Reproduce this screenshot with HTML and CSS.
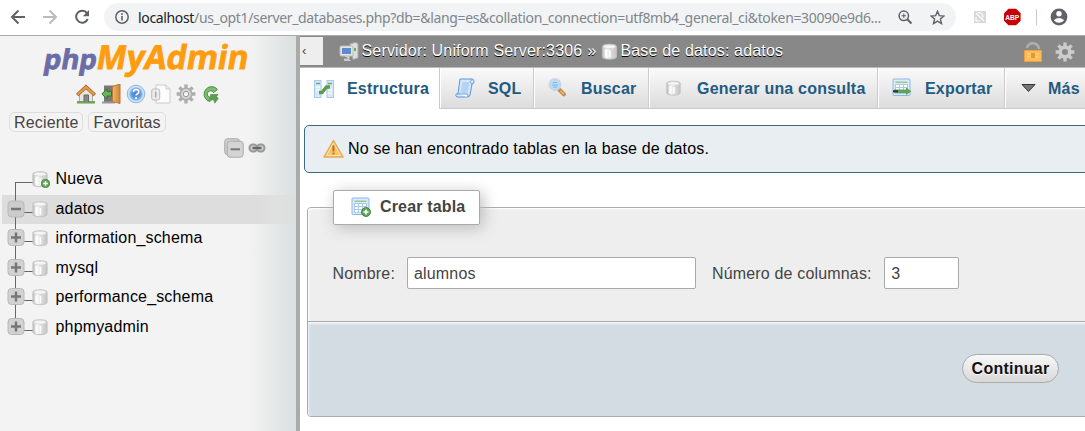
FILE: index.html
```html
<!DOCTYPE html>
<html lang="es">
<head>
<meta charset="utf-8">
<title>phpMyAdmin</title>
<link rel="stylesheet" href="styles.css">
</head>
<body>
<svg class="defs" width="0" height="0">
  <defs>
    <linearGradient id="gDb" x1="0" x2="1"><stop offset="0" stop-color="#bdbdbd"/><stop offset=".3" stop-color="#fafafa"/><stop offset=".6" stop-color="#dcdcdc"/><stop offset="1" stop-color="#c4c4c4"/></linearGradient>
    <linearGradient id="gWood" x1="0" x2="1"><stop offset="0" stop-color="#f2b96c"/><stop offset="1" stop-color="#cf8433"/></linearGradient>
    <radialGradient id="gHelp" cx=".5" cy=".5" r=".5"><stop offset="0" stop-color="#3f7fd0"/><stop offset=".6" stop-color="#5d97de"/><stop offset="1" stop-color="#9cc4ef"/></radialGradient>
    <symbol id="db" viewBox="0 0 18 18">
      <path d="M1.500 3.600C1.500 .6 16.500 .6 16.500 3.600V14.600C16.500 18 1.500 18 1.500 14.600Z" fill="url(#gDb)" stroke="#c0c0c0"/>
      <ellipse cx="9" cy="3.900" rx="6.600" ry="2" fill="#f5f5f5" stroke="#d2d2d2" stroke-width=".7"/>
      <path d="M5 7.500v7M9.500 8v7" stroke="#fff" stroke-width="1.600"/>
    </symbol>
    <symbol id="add" viewBox="0 0 10 10">
      <circle cx="5" cy="5" r="4.500" fill="#5da552" stroke="#397334" stroke-width=".8"/>
      <path d="M5 2.400v5.200M2.400 5h5.200" stroke="#fff" stroke-width="1.700"/>
    </symbol>
    <symbol id="gear" viewBox="0 0 20 20">
      <g stroke="currentColor" stroke-width="3.400"><path d="M10 .6v18.800M.6 10h18.800M3.400 3.400l13.200 13.200M16.600 3.400L3.400 16.600"/></g>
      <circle cx="10" cy="10" r="6.600" fill="currentColor"/>
    </symbol>
    <symbol id="table" viewBox="0 0 19 19">
      <rect x="1" y="1" width="17" height="16.500" rx="1" fill="#dceafa" stroke="#8db6e6"/>
      <path d="M3.500 4.200h12" stroke="#8fbf76" stroke-width="1.200"/>
      <rect x="3.500" y="6.500" width="12" height="9" fill="#fff" stroke="#a8c8ec"/>
      <path d="M7.500 6.500v9M11.500 6.500v9M3.500 9.500h12M3.500 12.500h12" stroke="#a8c8ec"/>
    </symbol>
  </defs>
</svg>

<header class="browser">
  <svg class="nav" width="104" height="35" viewBox="0 0 104 35" fill="none" stroke-width="2">
    <path d="M25 17H12.500M18.500 10.500L12 17l6.500 6.500" stroke="#5f6368"/>
    <path d="M43 17h12.500M49.500 10.500L56 17l-6.500 6.500" stroke="#b9bbbe"/>
    <path d="M87 13.200A6 6 0 1 0 87.700 19" stroke="#5f6368"/>
    <path d="M89 10v6.200h-6.200Z" fill="#5f6368"/>
  </svg>
  <div class="omnibox">
    <svg width="14" height="14" viewBox="0 0 14 14"><circle cx="7" cy="7" r="6.200" fill="none" stroke="#5f6368" stroke-width="1.500"/><path d="M7 6v4.500M7 3.300v1.700" stroke="#5f6368" stroke-width="1.600"/></svg>
    <span class="url"><b>localhost</b>/us_opt1/server_databases.php?db=&amp;lang=es&amp;collation_connection=utf8mb4_general_ci&amp;token=30090e9d6...</span>
    <svg class="mag" width="15" height="15" viewBox="0 0 15 15" fill="none" stroke="#5f6368"><circle cx="5.800" cy="5.800" r="4.700" stroke-width="1.500"/><path d="M9.200 9.200l4.300 4.300" stroke-width="2"/><path d="M5.800 3.500v4.600M3.500 5.800h4.600" stroke-width="1.100"/></svg>
    <svg class="star" width="15" height="15" viewBox="0 0 15 15"><path d="M7.500 1.300l1.800 4.300 4.600.4-3.500 3 1.100 4.600-4-2.500-4 2.500 1.100-4.600-3.500-3 4.600-.4z" fill="none" stroke="#5f6368" stroke-width="1.400"/></svg>
  </div>
  <svg class="ext" width="129" height="35" viewBox="0 0 129 35">
    <rect x="18" y="11" width="12" height="12" fill="#d8d8d8"/><path d="M20 13l8 8M22 12.500q5 0 5 5M20 17v4h4" stroke="#fff" stroke-width="1.200" fill="none"/>
    <path d="M52.500 8.800h7.600l4.500 4.500v7.400l-4.500 4.500h-7.600L48 20.700v-7.400z" fill="#c70000"/>
    <text x="56.300" y="20" class="abp" textLength="14" lengthAdjust="spacingAndGlyphs">ABP</text>
    <path d="M80.500 9v16" stroke="#c9cbcd"/>
    <circle cx="103" cy="17" r="8.400" fill="#5f6368"/><circle cx="103" cy="13.800" r="2.700" fill="#fff"/><path d="M97.800 20.300q5.200-4.400 10.400 0q-5.200 5-10.400 0Z" fill="#fff"/>
  </svg>
</header>

<div class="app">
  <aside class="sidebar">
    <svg class="logo" width="212" height="46" viewBox="0 0 212 46">
      <g transform="translate(0 33) skewX(-10)">
      <text class="logo-php" x="-0.500" y="0" textLength="53" lengthAdjust="spacingAndGlyphs">php</text>
      <text class="logo-my" x="52" y="0" textLength="152" lengthAdjust="spacingAndGlyphs">MyAdmin</text>
      </g>
    </svg>
    <div class="tools">
      <svg width="20" height="20" viewBox="0 0 20 20"><path d="M3.500 9v9h13V9L10 3z" fill="#e9e6e0" stroke="#aaa"/><path d="M1 18.300h18" stroke="#69a657" stroke-width="2.500"/><path d="M8 18v-7h4.500v7" fill="#888" stroke="#666"/><path d="M1.200 11L10 3l8.800 8" fill="none" stroke="#9c5e25" stroke-width="3.600"/><path d="M1.700 10.600L10 3l8.300 7.600" fill="none" stroke="#e49b49" stroke-width="2.200"/></svg>
      <svg width="20" height="20" viewBox="0 0 20 20"><rect x="3" y="1.500" width="10" height="17" fill="#777"/><path d="M1 18.500h13" stroke="#999" stroke-width="2"/><path d="M11.500 2.500L19 0v19.500l-7.500-2z" fill="url(#gWood)" stroke="#b87734"/><path d="M10.500 7.500H6V4.800L.8 10 6 15v-3h4.500z" fill="#68b45b" stroke="#39752f"/></svg>
      <svg width="20" height="20" viewBox="0 0 20 20"><circle cx="10" cy="10" r="8.800" fill="#cfe2f7" stroke="#8eb7e6"/><circle cx="10" cy="10" r="6.800" fill="url(#gHelp)"/><path d="M7.500 8q0-2.500 2.600-2.500T12.700 8q0 1.200-1.600 2-1 .6-1 1.600M10.100 13v1.900" fill="none" stroke="#fff" stroke-width="1.700"/></svg>
      <svg width="20" height="20" viewBox="0 0 20 20"><path d="M5 1h10l4 4v14H5z" fill="#fcfcfc" stroke="#cbcbcb"/><path d="M15 1v4h4" fill="#eee" stroke="#cbcbcb"/><rect x=".7" y="5" width="8" height="11" rx="2" fill="#ececec" stroke="#bbb"/><path d="M4.700 7.500v6" stroke="#aaa" stroke-width="1.500"/></svg>
      <svg width="20" height="20" viewBox="0 0 20 20" color="#adadad"><use href="#gear"/><circle cx="10" cy="10" r="5" fill="#d4d4d4"/><circle cx="10" cy="10" r="2.700" fill="#f3f3f3" stroke="#999"/></svg>
      <svg width="20" height="20" viewBox="0 0 20 20"><path d="M16.500 5.500A7.500 7.500 0 1 0 9 17.500V13.300A3.300 3.300 0 1 1 12.500 8.500Z" fill="#7cbd71" stroke="#4b8a43"/><path d="M9.500 10.500H17L15.600 12.600 17.300 14.600 13.800 19.200 12.500 15.500 9.500 16.500Z" fill="#5a9e4f" stroke="#4b8a43" stroke-width=".6"/></svg>
    </div>
    <div class="quick"><span>Reciente</span><span>Favoritas</span></div>
    <div class="tree-tools">
      <svg width="20" height="20" viewBox="0 0 20 20"><rect x=".7" y=".7" width="15" height="16" rx="3" fill="#d0d0d0" stroke="#aaa"/><rect x="3.200" y="3.200" width="16" height="16" rx="3" fill="#d4d4d4" stroke="#aaa"/><path d="M6.500 11.300h9.500" stroke="#777" stroke-width="2"/></svg>
      <svg width="18" height="10" viewBox="0 0 18 10" fill="none"><rect x="1.500" y="1.500" width="7.500" height="7" rx="3.200" fill="#ccc" stroke="#999" stroke-width="2"/><rect x="9" y="1.500" width="7.500" height="7" rx="3.200" fill="#ccc" stroke="#999" stroke-width="2"/><path d="M4.500 5h9" stroke="#666" stroke-width="2.400"/></svg>
    </div>
    <ul class="tree">
      <li><svg width="54" height="30" viewBox="0 0 54 30"><path d="M13.500 30V17.500M13 17.500H31" fill="none" stroke="#666"/><use href="#db" x="29.500" y="5" width="17" height="18"/><use href="#add" x="39" y="14" width="9" height="9"/></svg>Nueva</li>
      <li class="current"><svg width="54" height="30" viewBox="0 0 54 30"><path d="M13.500 0V30M13.500 17.500H31" fill="none" stroke="#666"/><rect x="6" y="6" width="16" height="16" rx="3.500" fill="#ccc" stroke="#b8b8b8"/><path d="M9 14h10" stroke="#777" stroke-width="2.500"/><use href="#db" x="29.500" y="5" width="17" height="18"/></svg>adatos</li>
      <li><svg width="54" height="30" viewBox="0 0 54 30"><path d="M13.500 0V30M13.500 17.500H31" fill="none" stroke="#666"/><rect x="6" y="5.500" width="16" height="16" rx="3.500" fill="#d2d2d2" stroke="#b8b8b8"/><path d="M9 13.500h10M14 8.500v10" stroke="#777" stroke-width="2.500"/><use href="#db" x="29.500" y="5" width="17" height="18"/></svg>information_schema</li>
      <li><svg width="54" height="30" viewBox="0 0 54 30"><path d="M13.500 0V30M13.500 17.500H31" fill="none" stroke="#666"/><rect x="6" y="5.500" width="16" height="16" rx="3.500" fill="#d2d2d2" stroke="#b8b8b8"/><path d="M9 13.500h10M14 8.500v10" stroke="#777" stroke-width="2.500"/><use href="#db" x="29.500" y="5" width="17" height="18"/></svg>mysql</li>
      <li><svg width="54" height="30" viewBox="0 0 54 30"><path d="M13.500 0V30M13.500 17.500H31" fill="none" stroke="#666"/><rect x="6" y="5.500" width="16" height="16" rx="3.500" fill="#d2d2d2" stroke="#b8b8b8"/><path d="M9 13.500h10M14 8.500v10" stroke="#777" stroke-width="2.500"/><use href="#db" x="29.500" y="5" width="17" height="18"/></svg>performance_schema</li>
      <li><svg width="54" height="30" viewBox="0 0 54 30"><path d="M13.500 0V17.500H31" fill="none" stroke="#666"/><rect x="6" y="5.500" width="16" height="16" rx="3.500" fill="#d2d2d2" stroke="#b8b8b8"/><path d="M9 13.500h10M14 8.500v10" stroke="#777" stroke-width="2.500"/><use href="#db" x="29.500" y="5" width="17" height="18"/></svg>phpmyadmin</li>
    </ul>
  </aside>

  <main class="content">
    <div class="crumbs">
      <span class="collapse">‹</span>
      <svg class="server" width="20" height="20" viewBox="0 0 20 20"><path d="M11 2l5-1.500 3 1V16l-5 1.500z" fill="#ddd" stroke="#aaa"/><path d="M16 6v3" stroke="#66b755" stroke-width="2"/><rect x="1" y="4" width="13" height="10" rx="1" fill="#e5e5e5" stroke="#bbb"/><rect x="3" y="6" width="9" height="6" fill="#5c8bd0"/><path d="M6 14h4v3H5.500v1.500h6" fill="#ccc" stroke="#ccc"/></svg>
      <span class="crumb">Servidor: Uniform Server:3306</span><span class="sep">»</span>
      <svg class="crumb-db" width="17" height="19" viewBox="0 0 18 18"><use href="#db"/></svg>
      <span class="crumb">Base de datos: adatos</span>
      <svg class="lock" width="20" height="20" viewBox="0 0 20 20"><path d="M4 6Q5 1.300 10 1.300T16 7" fill="none" stroke="#b0b0b0" stroke-width="2.400"/><path d="M1.500 8.500h17v11h-17z" fill="#fbbc59" stroke="#eda13b"/><path d="M4.500 12h11M4.500 15h11" stroke="#fbd999"/><path d="M8 11h4v5H8z" fill="#e29a36"/></svg>
      <svg class="cog" width="20" height="20" viewBox="0 0 20 20" color="#ccc"><use href="#gear"/><circle cx="10" cy="10" r="3" fill="#888"/></svg>
    </div>
    <nav class="tabs">
      <a class="active"><svg width="20" height="20" viewBox="0 0 20 20"><rect x=".5" y="1.500" width="6.500" height="17" fill="#d6e8fa" stroke="#a8c9ed"/><rect x="13" y="1.500" width="6.500" height="17" fill="#d6e8fa" stroke="#a8c9ed"/><path d="M2 4.500h4M14 4.500h4" stroke="#73a962" stroke-width="1.500"/><path d="M2 8h4M2 11h4M14 11h4M14 14h4" stroke="#fff"/><path d="M5 13.500h3L12.500 8h3.500" fill="none" stroke="#5a9e49" stroke-width="3.400"/></svg><span>Estructura</span></a>
      <a class="t-sql"><svg width="20" height="20" viewBox="0 0 20 20"><path d="M5 1h12q2 0 2 2.500T17 6L15 17q-.5 2-2.500 2H2q-1.500-1-1-3h2z" fill="#d4e6f9" stroke="#5d96d8"/><path d="M7.500 4h7l-2 11H5.500z" fill="#b5d3f4"/><path d="M3 16h9.500q1 1 0 3M16.500 1.500Q14.500 4 16.500 6" fill="#fff" stroke="#6a9edb"/></svg><span>SQL</span></a>
      <a class="t-find"><svg width="20" height="20" viewBox="0 0 20 20"><path d="M11 11.500l5 4.800" stroke="#c98c50" stroke-width="4" stroke-linecap="round"/><path d="M12.500 13l3.500 3" stroke="#efb774" stroke-width="1.600"/><circle cx="7" cy="6.500" r="5.600" fill="#b8dcf4" stroke="#c3d6ea" stroke-width="1.600"/><path d="M4 7h6M5 4.500h4M5 9h4" stroke="#80b6e2"/></svg><span>Buscar</span></a>
      <a class="t-query"><svg width="20" height="20" viewBox="0 0 20 20"><use href="#db" x="1.500" y="1" width="16" height="18"/></svg><span>Generar una consulta</span></a>
      <a class="t-export"><svg width="20" height="20" viewBox="0 0 20 20"><use href="#table" x="0" y="0" width="19" height="19"/><path d="M2 11.500h12V9.500l5.500 3.700-5.500 3.700v-2H2z" fill="#5da552"/><path d="M1 13.300h5" stroke="#333" stroke-width="2"/></svg><span>Exportar</span></a>
      <a class="t-more"><svg width="20" height="20" viewBox="0 0 20 20"><path d="M3 6.500h13L9.500 13.500z" fill="#777" stroke="#333"/></svg><span>Más</span></a>
    </nav>
    <div class="notice">
      <svg width="21" height="20" viewBox="0 0 21 20"><path d="M10.500 1.500L20 18H1z" fill="#fcc468" stroke="#e7a95b" stroke-width="1.500" stroke-linejoin="round"/><path d="M10.500 4L17.500 16.500h-14z" fill="none" stroke="#fce5b4"/><path d="M10.500 6.500v6M10.500 13.500v2" stroke="#b97218" stroke-width="2"/></svg>
      No se han encontrado tablas en la base de datos.
    </div>
    <form class="create">
      <div class="fields">
        <div class="legend"><svg width="20" height="20" viewBox="0 0 20 20"><use href="#table" width="19" height="19"/><use href="#add" x="10" y="10" width="10" height="10"/></svg>Crear tabla</div>
        <div class="row">
          <label for="name">Nombre:</label><input id="name" class="name" type="text" value="alumnos">
          <label for="cols">Número de columnas:</label><input id="cols" class="cols" type="text" value="3">
        </div>
      </div>
      <div class="submit"><button type="button">Continuar</button></div>
    </form>
  </main>
</div>
</body>
</html>
```
FILE: styles.css
```css
* { box-sizing: border-box; }
body {
  margin: 0;
  width: 1085px;
  height: 431px;
  overflow: hidden;
  background: #fff;
  color: #000;
  font: 16px "Liberation Sans", Arial, sans-serif;
  letter-spacing: 0.165px;
}
svg { display: block; flex: none; }
.defs { position: absolute; }

/* Browser toolbar */
.browser { display: flex; height: 36px; border-bottom: 1px solid #aaa; }
.omnibox {
  display: flex;
  align-items: center;
  width: 852px;
  height: 28px;
  margin-top: 3px;
  padding: 0 11px;
  border-radius: 14px;
  background: #f1f3f4;
}
.url {
  width: 744px;
  margin-left: 9px;
  white-space: nowrap;
  color: #80868b;
  font: 14px "Noto Sans", sans-serif;
  letter-spacing: -0.345px;
}
.url b { color: #202124; font-weight: 400; }
.mag { margin-left: 16px; }
.star { margin-left: 17px; }
.abp { fill: #fff; font: bold 8px "Liberation Sans", sans-serif; letter-spacing: 0; text-anchor: middle; }

.app { display: flex; height: 395px; }

/* Navigation panel */
.sidebar {
  width: 300px;
  border-right: 4px solid #aaa;
  background: linear-gradient(to right, #f3f3f3 84%, #dadfdf);
}
.logo { margin: 0 0 0 43px; overflow: visible; }
.logo-php, .logo-my { font-family: "Open Sans", sans-serif; font-weight: 700; letter-spacing: 0; stroke-width: 0.8px; }
.logo-php { fill: #6c6ca6; stroke: #6c6ca6; font-size: 27px; }
.logo-my { fill: #ff9c0d; stroke: #ff9c0d; font-size: 33px; }
.tools { display: flex; gap: 5px; padding: 2px 0 0 76px; }
.quick { display: flex; gap: 5px; padding: 8px 0 0 9px; }
.quick span {
  height: 20px;
  padding: 0 4px;
  border: 1px solid #ddd;
  border-radius: 5px;
  color: #444;
  line-height: 19px;
}
.tree-tools { display: flex; align-items: center; gap: 4px; padding: 6px 0 0 224px; }
.tree { margin: 7px 0 0 2px; padding: 0; list-style: none; }
.tree li { display: flex; height: 29.6px; line-height: 27px; }
.tree li svg { margin-right: -0.5px; }
.tree .current { background: linear-gradient(to right, #ddd 88%, #dddddd55); }

/* Main panel */
.content { flex: 1; min-width: 0; overflow: hidden; }
.crumbs {
  display: flex;
  align-items: center;
  height: 32px;
  border-bottom: 1px solid #bbb;
  background: #888;
  color: #fff;
  text-shadow: 0 1px 0 #000;
}
.collapse {
  width: 23px;
  height: 28px;
  margin: -1px 16px 0 0;
  padding-left: 2px;
  background: #eee;
  color: #444;
  font-size: 13px;
  line-height: 27px;
  text-shadow: none;
}
.crumb { line-height: 28px; margin: -1px 0 0 2.500px; white-space: nowrap; }
.sep { margin: -1px 4.500px 0 5px; }
.lock { margin-left: auto; }
.cog { margin: 0 10px 0 12px; }
.tabs { display: flex; height: 41px; letter-spacing: 0.2px; }
.tabs a {
  display: flex;
  align-items: center;
  flex: none;
  gap: 13px;
  padding-left: 14px;
  border-left: 1px solid #ccc;
  border-bottom: 1px solid #ccc;
  box-shadow: inset 1px 0 #fff;
  background: linear-gradient(#fafafa, #dcdcdc);
  color: #235a81;
  font-weight: 700;
  white-space: nowrap;
}
.tabs span { padding-top: 1px; }
.tabs .active { width: 139px; border: 0; background: #fff; }
.tabs .t-sql { width: 94px; padding-left: 15px; }
.tabs .t-find { width: 115px; }
.tabs .t-query { width: 229px; padding-left: 15px; }
.tabs .t-export { width: 127px; }
.tabs .t-more { width: 100px; gap: 9px; }
.notice {
  display: flex;
  align-items: center;
  gap: 4px;
  width: 800px;
  height: 48px;
  margin: 16px 0 0 4px;
  padding-left: 18px;
  border: 1px solid #3a6c7e;
  border-radius: 5px;
  background: #e8eef1;
}
.create {
  width: 800px;
  margin: 34px 0 0 7px;
  border: 1px solid #aaa;
  border-radius: 4px;
  color: #444;
}
.fields {
  height: 113px;
  background: #eee;
  border-radius: 4px 4px 0 0;
  box-shadow: inset 1px 1px 2px #fff;
}
.legend {
  display: flex;
  align-items: center;
  gap: 9px;
  position: relative;
  top: -18px;
  left: 25px;
  width: 147px;
  height: 35px;
  padding: 0 0 1px 17px;
  border: 1px solid #aaa;
  border-radius: 2px;
  background: #fff;
  box-shadow: 3px 3px 15px #bbb;
  font-weight: 700;
}
.row { display: flex; align-items: center; padding: 14px 0 0 24.5px; }
.row label { padding-top: 1px; }
.row input {
  height: 32px;
  padding: 1px 6px 0;
  border: 1px solid #aaa;
  border-radius: 2px;
  background: #fff;
  color: #444;
  font: inherit;
  letter-spacing: inherit;
}
.row .name { width: 289px; margin: 0 16px 0 12px; }
.row .cols { width: 75px; margin-left: 12.5px; }
.submit {
  height: 95px;
  padding: 32px 0 0 654px;
  border-top: 1px solid #aaa;
  border-radius: 0 0 4px 4px;
  background: #d3dce3;
  box-shadow: inset 1px 2px 2px #f2f5f7;
}
.submit button {
  width: 97px;
  height: 29px;
  padding: 0;
  border: 1px solid #aaa;
  border-radius: 15px;
  background: linear-gradient(#f8f8f8, #d8d8d8);
  color: #111;
  font: bold 16px "Liberation Sans", Arial, sans-serif;
  letter-spacing: 0.25px;
  text-shadow: 0 1px 0 #fff;
}
```
